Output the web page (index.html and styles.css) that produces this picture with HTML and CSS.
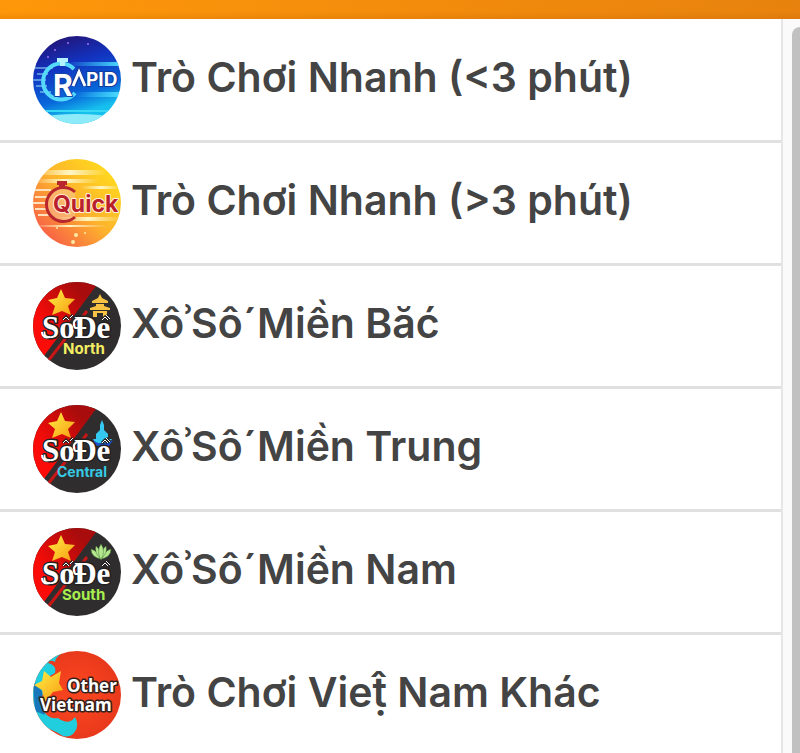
FILE: index.html
```html
<!DOCTYPE html>
<html lang="vi">
<head>
  <meta charset="UTF-8">
  <meta name="viewport" content="width=device-width, initial-scale=1">
  <title>Trò Chơi</title>
  <link rel="stylesheet" href="styles.css">
</head>
<body>
  <!-- shared lottery badge -->
  <svg class="defs" aria-hidden="true">
    <defs>
      <clipPath id="round"><circle cx="44" cy="44" r="44"/></clipPath>
      <linearGradient id="red" x1="0" y1="1" x2="1" y2="0">
        <stop offset="0.3" stop-color="#fb0c08"/>
        <stop offset="0.8" stop-color="#a80c0c"/>
      </linearGradient>
      <linearGradient id="gold" x1="0" y1="0" x2="1" y2="1">
        <stop offset="0.2" stop-color="#ffe03a"/>
        <stop offset="1" stop-color="#f79a12"/>
      </linearGradient>
      <symbol id="sode" viewBox="0 0 88 88">
        <g clip-path="url(#round)">
          <rect width="88" height="88" fill="#2f2d2e"/>
          <path d="M0 0H66L8 78H0Z" fill="url(#red)"/>
          <path d="M59 14L11 76" stroke="#2f2d2e" stroke-width="2"/>
          <path d="M54 29L15 79" stroke="#c81616" stroke-width="3"/>
          <path d="M28 7L32 16L42 17L35 24L38 33L29 29L19 33L22 24L15 18L24 16Z" fill="url(#gold)"/>
        </g>
      </symbol>
      <symbol id="sode-name" viewBox="0 0 88 88">
        <text class="sode-name" x="9" y="56">So</text>
        <text class="sode-name" x="41" y="56">Đe</text>
        <path d="M30 38L33 35L36 38M37 36L40 33M69 38L72 35L75 38M73 33L77 37" fill="none" stroke="#242122" stroke-width="3"/>
        <path d="M30 38L33 35L36 38M37 36L40 33M69 38L72 35L75 38M73 33L77 37" fill="none" stroke="#fff" stroke-width="1"/>
        <path d="M9 50Q9 57 17 55M42 46Q38 38 47 36" fill="none" stroke="#fff" stroke-width="2"/>
      </symbol>
    </defs>
  </svg>

  <header class="topbar"></header>

  <div class="page">
    <nav class="menu">
      <ul class="menu-list">
        <li class="menu-item">
          <a class="menu-link" href="#">
            <svg class="menu-icon" viewBox="0 0 88 88" aria-hidden="true">
              <defs>
                <linearGradient id="night" x1="0.2" y1="0" x2="0.5" y2="1">
                  <stop offset="0" stop-color="#241170"/>
                  <stop offset="0.35" stop-color="#1233c0"/>
                  <stop offset="0.7" stop-color="#0868da"/>
                  <stop offset="0.9" stop-color="#16c0ee"/>
                </linearGradient>
                <linearGradient id="beam">
                  <stop offset="0" stop-color="#35c9fa" stop-opacity="0"/>
                  <stop offset="1" stop-color="#4fdcff"/>
                </linearGradient>
              </defs>
              <g clip-path="url(#round)">
                <rect width="88" height="88" fill="url(#night)"/>
                <rect x="32" y="26" width="56" height="4" fill="url(#beam)"/>
                <rect x="40" y="56" width="48" height="5" fill="url(#beam)"/>
                <rect x="0" y="74" width="88" height="2" fill="#39d9f5"/>
                <path d="M0 82Q44 74 88 82V88H0Z" fill="#8deaf8"/>
                <g fill="#9f72ec">
                  <circle cx="22" cy="14" r="1"/><circle cx="35" cy="7" r="1"/><circle cx="55" cy="8" r="1"/><circle cx="15" cy="21" r="1"/>
                </g>
                <path d="M2 32H20M4 38H15M0 44H13M3 50H14M7 56H18" stroke="#9ceafd" stroke-width="1"/>
                <path d="M41 33A18 18 0 1 0 42 57" fill="none" stroke="#56dafb" stroke-width="4"/>
                <path d="M24 22H35V26H32V30H27V26H24Z" fill="#b3f2ff"/>
              </g>
              <text class="rapid-initial" x="20" y="60">R</text>
              <path d="M40 50L46 36L52 50" fill="none" stroke="#123c9b" stroke-width="5"/>
              <path d="M40 50L46 36L52 50" fill="none" stroke="#fff" stroke-width="3"/>
              <text class="rapid" x="53" y="50">PID</text>
            </svg>
            <span class="menu-text">Trò Chơi Nhanh (&lt;3 phút)</span>
          </a>
        </li>
        <li class="menu-item">
          <a class="menu-link" href="#">
            <svg class="menu-icon" viewBox="0 0 88 88" aria-hidden="true">
              <defs>
                <linearGradient id="sun" x1="1" y1="0.2" x2="0.2" y2="1">
                  <stop offset="0" stop-color="#ffdb1c"/>
                  <stop offset="0.5" stop-color="#fdb32d"/>
                  <stop offset="1" stop-color="#f75a48"/>
                </linearGradient>
                <linearGradient id="flare">
                  <stop offset="0" stop-color="#fff6c4" stop-opacity="0"/>
                  <stop offset="0.5" stop-color="#fff6c4"/>
                  <stop offset="1" stop-color="#fff6c4" stop-opacity="0"/>
                </linearGradient>
              </defs>
              <g clip-path="url(#round)">
                <rect width="88" height="88" fill="url(#sun)"/>
                <rect width="74" height="5" y="11" fill="url(#flare)"/>
                <rect width="66" height="4" y="20" fill="url(#flare)"/>
                <rect width="40" height="3" x="48" y="27" fill="url(#flare)"/>
                <rect width="66" height="4" x="22" y="58" fill="url(#flare)"/>
                <rect width="74" height="2" y="66" fill="url(#flare)"/>
                <path d="M0 31H18M2 38H14M0 44H12M2 50H13M5 56H18" stroke="#ffe2bd" stroke-width="2"/>
                <path d="M42 33A17 17 0 1 0 42 58" fill="#fac9a0" fill-opacity="0.5" stroke="#b9272e" stroke-width="3"/>
                <path d="M24 22H34V26H32V30H26V26H24Z" fill="#b9272e"/>
                <g fill="#ffe9a3">
                  <circle cx="24" cy="69" r="1"/><circle cx="43" cy="76" r="2"/><circle cx="52" cy="74" r="1"/><circle cx="40" cy="83" r="2"/>
                </g>
              </g>
              <text class="quick" x="20" y="53">Quick</text>
            </svg>
            <span class="menu-text">Trò Chơi Nhanh (&gt;3 phút)</span>
          </a>
        </li>
        <li class="menu-item">
          <a class="menu-link" href="#">
            <svg class="menu-icon" viewBox="0 0 88 88" aria-hidden="true">
              <use href="#sode"/>
              <path d="M67 12L69 16L75 19V21H59V19L65 16ZM63 22H71V24L77 26V28H57V26L63 24ZM60 29H74V35H70V31H64V35H60Z" fill="#f8c343"/>
              <use href="#sode-name"/>
              <text class="region north" x="30" y="72">North</text>
            </svg>
            <span class="menu-text">XôʾSô´Miền Băć</span>
          </a>
        </li>
        <li class="menu-item">
          <a class="menu-link" href="#">
            <svg class="menu-icon" viewBox="0 0 88 88" aria-hidden="true">
              <use href="#sode"/>
              <path d="M69 15L71 20V25L75 29V34H79L76 38H62L60 34H63V29L67 25V20Z" fill="#35c9f2"/>
              <path d="M60 35Q69 42 80 35L76 41H64Z" fill="#1c50c8"/>
              <use href="#sode-name"/>
              <text class="region central" x="24" y="72">Central</text>
            </svg>
            <span class="menu-text">XôʾSô´Miền Trung</span>
          </a>
        </li>
        <li class="menu-item">
          <a class="menu-link" href="#">
            <svg class="menu-icon" viewBox="0 0 88 88" aria-hidden="true">
              <use href="#sode"/>
              <g fill="#b5e78e" stroke="#477b36" stroke-width="0.5">
                <path d="M68 31Q58 29 58 21Q65 23 68 31ZM68 31Q78 29 78 21Q71 23 68 31Z"/>
                <path d="M68 31Q61 25 63 18Q68 22 68 31ZM68 31Q75 25 73 18Q68 22 68 31Z"/>
                <path d="M68 32Q63 23 68 16Q73 23 68 32Z"/>
              </g>
              <use href="#sode-name"/>
              <text class="region south" x="29" y="72">South</text>
            </svg>
            <span class="menu-text">XôʾSô´Miền Nam</span>
          </a>
        </li>
        <li class="menu-item">
          <a class="menu-link" href="#">
            <svg class="menu-icon" viewBox="0 0 88 88" aria-hidden="true">
              <defs>
                <radialGradient id="land">
                  <stop offset="0.4" stop-color="#f6431f"/>
                  <stop offset="1" stop-color="#e8391c"/>
                </radialGradient>
              </defs>
              <g clip-path="url(#round)">
                <rect width="88" height="88" fill="url(#land)"/>
                <path d="M0 0H34Q22 5 22 11Q17 8 15 12Q24 14 22 22L12 28L8 54Q13 69 25 67Q36 75 42 66Q47 75 41 82Q34 89 25 82L0 70Z" fill="#20cedd"/>
                <path d="M0 30L9 40V54L12 64L2 60Z" fill="#1876ba"/>
                <path d="M11 20L18 26L28 20L26 32L30 39L20 41L12 51L9 39L1 34L9 30Z" fill="url(#gold)"/>
              </g>
              <text class="other"><tspan x="34" y="41">Other</tspan><tspan x="7" y="60">Vietnam</tspan></text>
            </svg>
            <span class="menu-text">Trò Chơi Vieṭ&#x302; Nam Khác</span>
          </a>
        </li>
      </ul>
    </nav>
    <div class="scrollbar"><div class="scrollbar-thumb"></div></div>
  </div>
</body>
</html>
```
FILE: styles.css
```css
* {
  box-sizing: border-box;
}

body {
  display: flex;
  flex-direction: column;
  height: 100vh;
  margin: 0;
  overflow: hidden;
  font-family: Inter, "Liberation Sans", sans-serif;
  background-color: #fff;
}

.defs {
  position: absolute;
  width: 0;
  height: 0;
}

.topbar {
  flex: none;
  height: 19px;
  background: linear-gradient(to bottom, transparent 60%, rgba(180, 90, 0, 0.2)), linear-gradient(to right, #ff970a, #e7820e);
}

.page {
  display: flex;
  flex: 1;
  min-height: 0;
}

.menu {
  flex: 1;
  min-width: 0;
  overflow: hidden;
  border-right: 2px solid #e6e6e6;
}

.menu-list {
  margin: 0;
  padding: 1px 0 0;
  list-style: none;
}

.menu-item {
  border-bottom: 3px solid #e0e0e0;
}

.menu-link {
  display: flex;
  align-items: center;
  gap: 10px;
  padding: 16px 33px;
  color: #444;
  text-decoration: none;
}

.menu-icon {
  flex: none;
  width: 88px;
  height: 88px;
}

.menu-text {
  padding-bottom: 6px;
  font-size: 41px;
  font-weight: 600;
  line-height: 50px;
  white-space: nowrap;
}

.scrollbar {
  flex: none;
  width: 17px;
  padding: 8px 0 0 9px;
  overflow: hidden;
  background-color: #fafafa;
}

.scrollbar-thumb {
  height: 100%;
  background-color: #c1c1c1;
  border-radius: 8px 0 0 0;
}

/* badge lettering */
.menu-icon text,
.sode-name {
  font-weight: 700;
  paint-order: stroke;
  stroke-linejoin: round;
}

.rapid-initial {
  font-size: 30px;
  fill: #fff;
  stroke: #1446a8;
  stroke-width: 2px;
}

.rapid {
  font-size: 19px;
  fill: #fff;
  stroke: #123c9b;
  stroke-width: 2px;
}

.quick {
  font-size: 23px;
  fill: #b9202c;
  stroke: #fff0d8;
  stroke-width: 2px;
}

.sode-name {
  font-family: "Liberation Serif", serif;
  font-size: 31px;
  fill: #fff;
  stroke: #242122;
  stroke-width: 3px;
}

.region {
  font-size: 15px;
}

.north {
  fill: #f5ee63;
}

.central {
  font-size: 14px;
  fill: #36cbe5;
}

.south {
  fill: #a8ed4f;
}

.other {
  font-family: "Open Sans", sans-serif;
  font-size: 17px;
  fill: #fff;
  stroke: #33201c;
  stroke-width: 3px;
}
```
